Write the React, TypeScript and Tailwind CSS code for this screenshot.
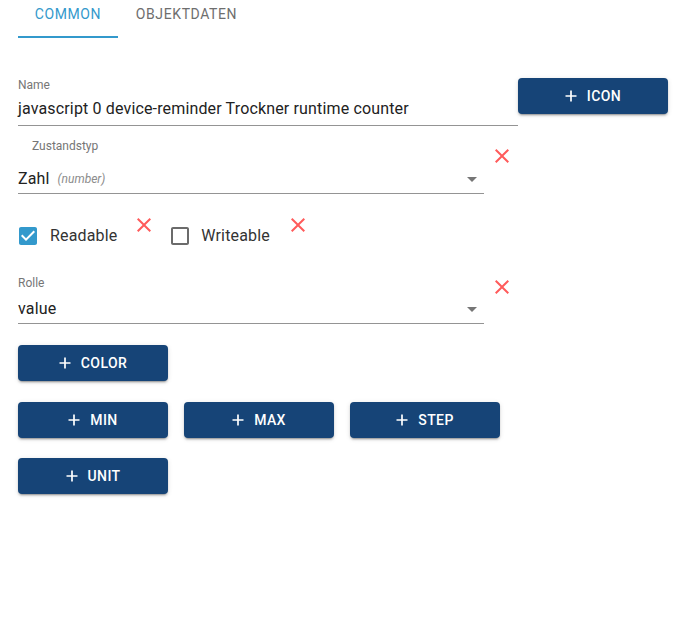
import React from "react";

const font = { fontFamily: "Roboto, 'Liberation Sans', sans-serif" };

const PlusIcon = () => (
  <svg width="12" height="12" viewBox="0 0 12 12" className="shrink-0">
    <path d="M6 0.5v11M0.5 6h11" stroke="white" strokeWidth="1.7" />
  </svg>
);

const ClearIcon = () => (
  <svg width="24" height="24" viewBox="0 0 24 24" className="shrink-0">
    <path
      fill="#ff5b5b"
      d="M19 6.41 17.59 5 12 10.59 6.41 5 5 6.41 10.59 12 5 17.59 6.41 19 12 13.41 17.59 19 19 17.59 13.41 12z"
    />
  </svg>
);

const ArrowDrop = () => (
  <svg width="24" height="24" viewBox="0 0 24 24" className="shrink-0">
    <path fill="#767676" d="M7 10l5 5 5-5z" />
  </svg>
);

const CheckedBox = () => (
  <svg width="24" height="24" viewBox="0 0 24 24" className="shrink-0">
    <path
      fill="#3399cc"
      d="M19 3H5c-1.11 0-2 .9-2 2v14c0 1.1.89 2 2 2h14c1.11 0 2-.9 2-2V5c0-1.1-.89-2-2-2zm-9 14l-5-5 1.41-1.41L10 14.17l7.59-7.59L19 8l-9 9z"
    />
  </svg>
);

const EmptyBox = () => (
  <svg width="24" height="24" viewBox="0 0 24 24" className="shrink-0">
    <path
      fill="#6b6b6b"
      d="M19 5v14H5V5h14m0-2H5c-1.1 0-2 .9-2 2v14c0 1.1.9 2 2 2h14c1.1 0 2-.9 2-2V5c0-1.1-.9-2-2-2z"
    />
  </svg>
);

const AddButton: React.FC<{ label: string }> = ({ label }) => (
  <button className="flex items-center justify-center gap-[10px] w-[150px] h-[36px] rounded-[4px] bg-[#164477] text-white text-[14px] font-medium uppercase tracking-[0.4px] shadow-[0_3px_1px_-2px_rgba(0,0,0,0.2),0_2px_2px_0_rgba(0,0,0,0.14),0_1px_5px_0_rgba(0,0,0,0.12)]">
    <PlusIcon />
    <span>{label}</span>
  </button>
);

const App: React.FC = () => {
  return (
    <div className="w-[689px] h-[618px] bg-white overflow-hidden" style={font}>
      {/* Tabs */}
      <div className="flex h-[38px] pl-[18px]">
        <div className="w-[100px] flex justify-center pt-[4px] border-b-2 border-[#3399cc] text-[14px] leading-[20px] uppercase tracking-[0.6px] text-[#3399cc]">
          Common
        </div>
        <div className="w-[137px] flex justify-center pt-[4px] text-[14px] leading-[20px] uppercase tracking-[0.6px] text-[#6e6e6e]">
          Objektdaten
        </div>
      </div>

      <div className="pl-[18px]">
        {/* Name */}
        <div className="flex mt-[39px]">
          <div className="w-[500px]">
            <div className="text-[12px] leading-[16px] text-[#767676]">Name</div>
            <div className="mt-[4px] pb-[4px] text-[16px] leading-[24px] tracking-[0.15px] text-[#222] border-b border-[#949494]">
              javascript 0 device-reminder Trockner runtime counter
            </div>
          </div>
          <div className="mt-[1px]">
            <AddButton label="Icon" />
          </div>
        </div>

        {/* Zustandstyp */}
        <div className="flex items-start mt-[12px]">
          <div className="w-[466px]">
            <div className="pl-[14px] text-[12px] leading-[16px] text-[#767676]">Zustandstyp</div>
            <div className="mt-[13px] pb-[2px] flex items-start border-b border-[#949494]">
              <span className="text-[16px] leading-[24px] tracking-[0.15px] text-[#222]">Zahl</span>
              <span className="ml-[8px] text-[12px] leading-[24px] italic text-[#8c8c8c]">(number)</span>
              <div className="ml-auto">
                <ArrowDrop />
              </div>
            </div>
          </div>
          <div className="ml-[6px] mt-[6px]">
            <ClearIcon />
          </div>
        </div>

        {/* Checkboxes */}
        <div className="flex items-start mt-[21px] ml-[-2px]">
          <div className="flex items-center h-[42px]">
            <CheckedBox />
            <span className="ml-[10px] text-[16px] leading-[24px] tracking-[0.15px] text-[#333]">Readable</span>
          </div>
          <div className="ml-[15px] mt-[-2px]">
            <ClearIcon />
          </div>
          <div className="flex items-center h-[42px] ml-[12px]">
            <EmptyBox />
            <span className="ml-[9px] text-[16px] leading-[24px] tracking-[0.15px] text-[#333]">Writeable</span>
          </div>
          <div className="ml-[16px] mt-[-2px]">
            <ClearIcon />
          </div>
        </div>

        {/* Rolle */}
        <div className="flex items-start mt-[18px]">
          <div className="w-[466px]">
            <div className="text-[12px] leading-[16px] text-[#767676]">Rolle</div>
            <div className="mt-[6px] pb-[2px] flex items-start border-b border-[#949494]">
              <span className="text-[16px] leading-[24px] tracking-[0.15px] text-[#222]">value</span>
              <div className="ml-auto">
                <ArrowDrop />
              </div>
            </div>
          </div>
          <div className="ml-[6px]">
            <ClearIcon />
          </div>
        </div>

        {/* Buttons */}
        <div className="mt-[21px]">
          <AddButton label="Color" />
        </div>
        <div className="flex gap-[16px] mt-[21px]">
          <AddButton label="Min" />
          <AddButton label="Max" />
          <AddButton label="Step" />
        </div>
        <div className="mt-[20px]">
          <AddButton label="Unit" />
        </div>
      </div>
    </div>
  );
};

export default App;
